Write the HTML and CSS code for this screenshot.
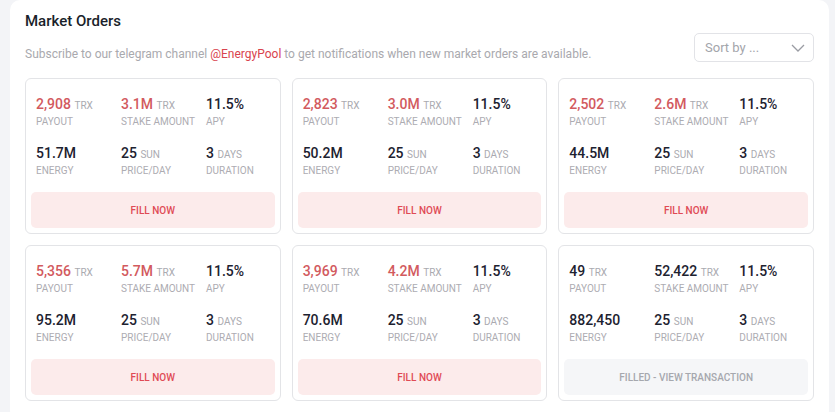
FILE: index.html
```html
<!DOCTYPE html>
<html lang="en">
<head>
    <meta charset="UTF-8">
    <meta name="viewport" content="width=device-width, initial-scale=1.0">
    <title>Market Orders</title>
    <link rel="stylesheet" href="styles.css">
</head>
<body>

<div class="panel">
    <h2>Market Orders</h2>
    <div class="panel-head">
        <p class="hint">Subscribe to our telegram channel <a href="#">@EnergyPool</a> to get notifications when new market orders are available.</p>
        <div class="sort">
            <span>Sort by ...</span>
            <svg width="14" height="8" viewBox="0 0 14 8"><path d="M1 1l6 6 6-6" fill="none" stroke="#9a9ca3" stroke-width="1.3"/></svg>
        </div>
    </div>

    <div class="orders-grid">
        <!-- open orders -->
        <div class="order-card">
            <div class="stats">
                <div><div class="val red">2,908 <small>TRX</small></div><div class="lbl">Payout</div></div>
                <div><div class="val red">3.1M <small>TRX</small></div><div class="lbl">Stake Amount</div></div>
                <div><div class="val">11.5%</div><div class="lbl">APY</div></div>
                <div><div class="val">51.7M</div><div class="lbl">Energy</div></div>
                <div><div class="val">25 <small>SUN</small></div><div class="lbl">Price/Day</div></div>
                <div><div class="val">3 <small>DAYS</small></div><div class="lbl">Duration</div></div>
            </div>
            <button class="fill-btn">FILL NOW</button>
        </div>

        <div class="order-card">
            <div class="stats">
                <div><div class="val red">2,823 <small>TRX</small></div><div class="lbl">Payout</div></div>
                <div><div class="val red">3.0M <small>TRX</small></div><div class="lbl">Stake Amount</div></div>
                <div><div class="val">11.5%</div><div class="lbl">APY</div></div>
                <div><div class="val">50.2M</div><div class="lbl">Energy</div></div>
                <div><div class="val">25 <small>SUN</small></div><div class="lbl">Price/Day</div></div>
                <div><div class="val">3 <small>DAYS</small></div><div class="lbl">Duration</div></div>
            </div>
            <button class="fill-btn">FILL NOW</button>
        </div>

        <div class="order-card">
            <div class="stats">
                <div><div class="val red">2,502 <small>TRX</small></div><div class="lbl">Payout</div></div>
                <div><div class="val red">2.6M <small>TRX</small></div><div class="lbl">Stake Amount</div></div>
                <div><div class="val">11.5%</div><div class="lbl">APY</div></div>
                <div><div class="val">44.5M</div><div class="lbl">Energy</div></div>
                <div><div class="val">25 <small>SUN</small></div><div class="lbl">Price/Day</div></div>
                <div><div class="val">3 <small>DAYS</small></div><div class="lbl">Duration</div></div>
            </div>
            <button class="fill-btn">FILL NOW</button>
        </div>

        <div class="order-card">
            <div class="stats">
                <div><div class="val red">5,356 <small>TRX</small></div><div class="lbl">Payout</div></div>
                <div><div class="val red">5.7M <small>TRX</small></div><div class="lbl">Stake Amount</div></div>
                <div><div class="val">11.5%</div><div class="lbl">APY</div></div>
                <div><div class="val">95.2M</div><div class="lbl">Energy</div></div>
                <div><div class="val">25 <small>SUN</small></div><div class="lbl">Price/Day</div></div>
                <div><div class="val">3 <small>DAYS</small></div><div class="lbl">Duration</div></div>
            </div>
            <button class="fill-btn">FILL NOW</button>
        </div>

        <div class="order-card">
            <div class="stats">
                <div><div class="val red">3,969 <small>TRX</small></div><div class="lbl">Payout</div></div>
                <div><div class="val red">4.2M <small>TRX</small></div><div class="lbl">Stake Amount</div></div>
                <div><div class="val">11.5%</div><div class="lbl">APY</div></div>
                <div><div class="val">70.6M</div><div class="lbl">Energy</div></div>
                <div><div class="val">25 <small>SUN</small></div><div class="lbl">Price/Day</div></div>
                <div><div class="val">3 <small>DAYS</small></div><div class="lbl">Duration</div></div>
            </div>
            <button class="fill-btn">FILL NOW</button>
        </div>

        <!-- filled order -->
        <div class="order-card">
            <div class="stats">
                <div><div class="val">49 <small>TRX</small></div><div class="lbl">Payout</div></div>
                <div><div class="val">52,422 <small>TRX</small></div><div class="lbl">Stake Amount</div></div>
                <div><div class="val">11.5%</div><div class="lbl">APY</div></div>
                <div><div class="val">882,450</div><div class="lbl">Energy</div></div>
                <div><div class="val">25 <small>SUN</small></div><div class="lbl">Price/Day</div></div>
                <div><div class="val">3 <small>DAYS</small></div><div class="lbl">Duration</div></div>
            </div>
            <button class="fill-btn filled">FILLED - VIEW TRANSACTION</button>
        </div>
    </div>
</div>

</body>
</html>
```

FILE: styles.css
```css
body {
    margin: 0;
    font-family: Roboto, "Liberation Sans", Arial, sans-serif;
    background-color: #f3f4f7;
    color: #1d2230;
}

.panel {
    background-color: #ffffff;
    margin: 0 6px 0 10px;
    padding: 11px 15px 20px;
    border-radius: 10px;
}

.panel h2 {
    margin: 0;
    font-size: 15px;
    font-weight: 500;
    line-height: 20px;
    color: #1a1f2b;
}

.panel-head {
    display: flex;
    justify-content: space-between;
    align-items: flex-end;
    margin-top: 2px;
}

.hint {
    margin: 0 0 -1px;
    font-size: 12px;
    line-height: 18px;
    color: #a9a9ae;
}

.hint a {
    color: #d9434e;
    text-decoration: none;
}

.sort {
    width: 120px;
    height: 29px;
    box-sizing: border-box;
    border: 1px solid #e2e3e7;
    border-radius: 5px;
    display: flex;
    align-items: center;
    justify-content: space-between;
    padding: 0 8px 0 10px;
    font-size: 13px;
    color: #a3a5ab;
}

.orders-grid {
    display: grid;
    grid-template-columns: repeat(3, minmax(0, 1fr));
    gap: 11px;
    margin-top: 16px;
}

.order-card {
    border: 1px solid #e3e4e7;
    border-radius: 6px;
    padding: 16px 5px 5px;
}

.stats {
    display: grid;
    grid-template-columns: 85px 85px 1fr;
    row-gap: 15px;
    padding: 0 5px;
}

.val {
    font-size: 14px;
    font-weight: 500;
    line-height: 18px;
    color: #1d2230;
}

.val.red {
    color: #d25a5e;
}

.val small {
    font-size: 10px;
    font-weight: 400;
    line-height: 1;
    color: #aaaab0;
}

.lbl {
    margin-top: 2px;
    font-size: 10px;
    line-height: 14px;
    text-transform: uppercase;
    color: #adacb2;
}

.fill-btn {
    display: block;
    width: 100%;
    height: 36px;
    margin-top: 14px;
    border: none;
    border-radius: 5px;
    background-color: #fcebeb;
    color: #e04a55;
    font-family: inherit;
    font-size: 10px;
    font-weight: 500;
    cursor: pointer;
}

.fill-btn.filled {
    background-color: #f5f6f8;
    color: #a6a8ae;
}
```
